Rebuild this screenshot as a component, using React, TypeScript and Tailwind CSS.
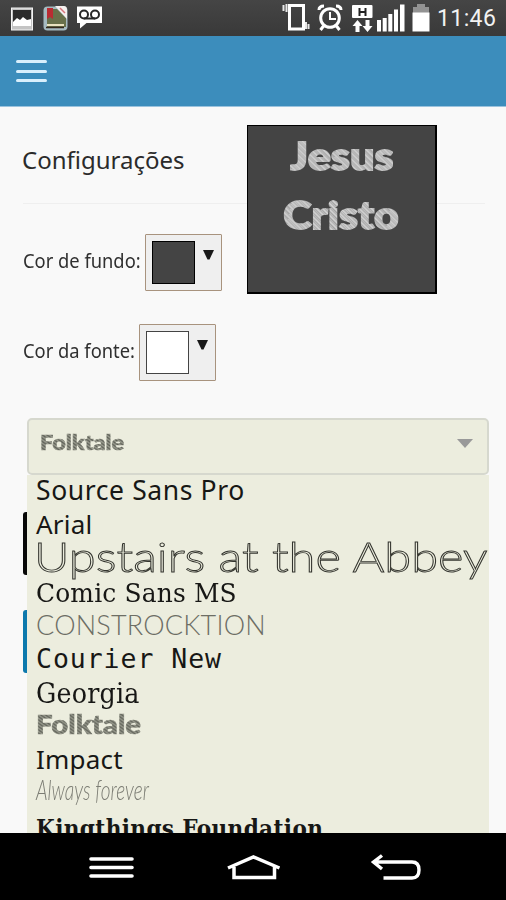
import React from "react";

const sketchFill =
  "bg-[repeating-linear-gradient(38deg,#62645b_0px,#9b9d90_1.3px,#5e6057_2.6px)] bg-clip-text text-transparent [-webkit-text-stroke:0.6px_transparent]";

const chalkFill =
  "bg-[repeating-linear-gradient(48deg,#a0a0a0_0px,#d6d6d6_1.5px,#adadad_3px,#c9c9c9_4px)] bg-clip-text text-transparent [-webkit-text-stroke:1.8px_transparent]";

const fonts: { name: string; row: string; text: string }[] = [
  { name: "Source Sans Pro", row: "h-[32px] leading-[31px]", text: "font-['Noto_Sans',sans-serif] text-[26.5px] tracking-[0.600px]" },
  { name: "Arial", row: "h-[34px] leading-[34px]", text: "font-['Noto_Sans',sans-serif] text-[26px] tracking-[0.200px]" },
  {
    name: "Upstairs at the Abbey",
    row: "h-[34px] leading-[31px]",
    text: "scale-x-[1.190] -ml-[2px] font-[Lato,sans-serif] text-[41px] font-light text-[#ecedde] [-webkit-text-stroke:0.9px_#33342e]",
  },
  { name: "Comic Sans MS", row: "h-[34px] leading-[35px]", text: "scale-x-[1.045] font-['DejaVu_Serif_Condensed','DejaVu_Serif',serif] text-[26.5px] tracking-[0.150px]" },
  { name: "CONSTROCKTION", row: "h-[33px] leading-[32px]", text: "font-[Lato,sans-serif] font-light text-[27px] tracking-[0.200px] text-[#6d6e65]" },
  { name: "Courier New", row: "h-[34px] leading-[34px]", text: "font-['DejaVu_Sans_Mono',monospace] text-[26.5px] tracking-[0.950px]" },
  { name: "Georgia", row: "h-[34px] leading-[35px]", text: "scale-x-[1.045] font-['DejaVu_Serif_Condensed','DejaVu_Serif',serif] text-[27px] tracking-[0.200px]" },
  { name: "Folktale", row: "h-[32px] leading-[28px]", text: `scale-x-[1.130] font-[Lato,sans-serif] font-black text-[26px] ${sketchFill}` },
  { name: "Impact", row: "h-[34px] leading-[35px]", text: "font-['Noto_Sans',sans-serif] text-[26px] tracking-[0.200px]" },
  { name: "Always forever", row: "h-[34px] leading-[27px]", text: "scale-x-[0.680] font-[Lato,sans-serif] font-light italic text-[28px] text-[#7c7d74]" },
  { name: "Kingthings Foundation", row: "h-[34px] leading-[38px]", text: "font-['DejaVu_Serif_Condensed','DejaVu_Serif',serif] font-bold text-[24px] tracking-[0.380px]" },
];

function StatusBar() {
  return (
    <div className="flex h-9 shrink-0 items-start bg-gradient-to-b from-[#454545] to-[#393939]">
      <svg className="h-9 w-[110px]" viewBox="0 0 110 36">
        <rect x="11.5" y="8" width="21" height="22" fill="#c4c4c4" stroke="#f4f4f4" />
        <rect x="13" y="10" width="18" height="12" fill="#2b2b2b" />
        <path d="M13 22l4-4 3 2 3-3 4 3 4-1v7H13z" fill="#fff" />
        <rect x="43.500" y="6.500" width="24" height="24" rx="4" fill="#a5bac0" />
        <path d="M47 9h10l9 9v9H47z" fill="#68704a" />
        <path d="M47 8h6v11l-3-2-3 2z" fill="#b92c32" />
        <path d="M55 6h9q3 0 3 4v9z" fill="#f4f0ee" />
        <path d="M60 8l5 5" stroke="#d8757c" strokeWidth="1.500" />
        <path d="M47 25h17" stroke="#e9e2c0" strokeWidth="2" />
        <path d="M46 27.500h18" stroke="#34291d" strokeWidth="1.500" />
        <path d="M77 6.500h25V23H86.500L80 28.500V23h-3z" fill="#fff" />
        <g fill="none" stroke="#282828" strokeWidth="2">
          <circle cx="84" cy="14.500" r="4" />
          <circle cx="95" cy="14.500" r="4" />
          <path d="M84 18.500h11" />
        </g>
      </svg>
      <svg className="ml-auto h-9 w-[154px]" viewBox="280 0 154 36">
        <rect x="289.500" y="5.500" width="14" height="23.500" fill="none" stroke="#fff" strokeWidth="3" />
        <path d="M283.500 5v6M286.500 4v8M306 22v7M308.500 24v5" stroke="#e8e8e8" strokeWidth="2" />
        <g fill="none" stroke="#fff">
          <circle cx="330" cy="18" r="9.300" strokeWidth="3" />
          <path d="M330 12v7h6" strokeWidth="2" />
          <path d="M319 10q0-4 5-4M341 10q0-4-5-4M323.500 26l-3 4M336.500 26l3 4" strokeWidth="3" />
        </g>
        <rect x="352" y="5" width="20.500" height="13" rx="1" fill="#fff" />
        <path d="M359.500 8v8M365.500 8v8M359.500 12h6" stroke="#222" strokeWidth="2" />
        <path d="M357.500 20l5 6h-3v6h-4v-6h-3zM367.500 32l-5-6h3v-6h4v6h3z" fill="#fff" />
        <path
          d="M377 20h4v11.500h-4zM382.700 18h4v13.500h-4zM388.300 14h4v17.500h-4zM394 9.500h4v22h-4zM400 4.500h4.500v27H400z"
          fill="#fff"
        />
        <path d="M417 4h8v3h4v6h-16V7h4z" fill="#929292" />
        <path d="M412.500 12.500h17v19h-17z" fill="#fff" />
      </svg>
      <span className="ml-[3px] w-[69px] whitespace-nowrap font-[Roboto,sans-serif] text-[23px] leading-[38px] tracking-[0.400px] text-[#f2f2f2]">
        11:46
      </span>
    </div>
  );
}

function ColorPicker({ label, swatch, labelClass }: { label: string; swatch: string; labelClass: string }) {
  return (
    <div className="flex h-[57px] items-start">
      <span className={`origin-left scale-x-[0.965] whitespace-nowrap text-[19px] leading-[55px] text-[#303030] ${labelClass}`}>
        {label}
      </span>
      <button className="flex h-[57px] w-[77px] shrink-0 rounded-[1px] border border-[#a8937e] bg-[#efefef] pl-[6px] pt-[6px]">
        <span className={`block h-[43px] w-[43px] border ${swatch}`} />
        <svg className="ml-[8px] mt-[9px]" width="11" height="10" viewBox="0 0 11 10">
          <path d="M0 0h11L6.500 9.500h-2z" fill="#181818" />
        </svg>
      </button>
    </div>
  );
}

function NavigationBar() {
  return (
    <nav className="flex h-[67px] shrink-0 bg-black">
      <svg className="h-[67px] w-full" viewBox="0 833 506 67" fill="none" stroke="#fff">
        <path d="M91 859h41M91 867.500h41M91 876h41" strokeWidth="3.600" strokeLinecap="round" />
        <path d="M228 868L253.500 857l26 11M234 867v10.500h40.500V867" strokeWidth="3.500" />
        <path d="M382 855.500l-8.500 6.500 8.500 7M374 862h38q7 0 7 8t-7 8h-28.500" strokeWidth="3.400" />
      </svg>
    </nav>
  );
}

export default function App() {
  return (
    <div className="flex h-[900px] w-[506px] flex-col overflow-hidden bg-[#f9f9f9] font-['Noto_Sans',sans-serif]">
      <StatusBar />
      <header className="flex h-[71px] shrink-0 border-b border-[#9bc3de] bg-[#3c8dbc] pl-[16px] pt-[24px]">
        <button className="flex h-[22px] w-[31px] flex-col justify-between">
          <span className="h-[3px] w-full rounded-sm bg-[#d9effc]" />
          <span className="h-[3px] w-full rounded-sm bg-[#d9effc]" />
          <span className="h-[3px] w-full rounded-sm bg-[#d9effc]" />
        </button>
      </header>

      <main className="relative flex min-h-0 flex-1 flex-col overflow-hidden">
        <section className="flex h-[311px] shrink-0 flex-col pl-[23px] pr-[21px]">
          <h1 className="h-[97px] shrink-0 border-b border-[#efefef] text-[24px] leading-[106px] text-[#2b2b2b]">
            <span className="-ml-px inline-block">Configurações</span>
          </h1>
          <div className="mt-[30px] flex flex-col gap-[33px]">
            <ColorPicker label="Cor de fundo:" swatch="border-black bg-[#444444]" labelClass="w-[122px]" />
            <ColorPicker label="Cor da fonte:" swatch="border-[#444] bg-white" labelClass="w-[116px]" />
          </div>
        </section>

        {/* Live preview floats over the settings heading and its divider */}
        <div className="absolute left-[247px] top-[18px] flex h-[169px] w-[190px] flex-col items-center border border-r-2 border-b-2 border-black bg-[#444444] font-[Lato,sans-serif] text-[38px] font-black leading-[59px]">
          <span className={`scale-x-[1.140] ${chalkFill}`}>Jesus</span>
          <span className={`scale-x-[1.130] ${chalkFill}`}>Cristo</span>
        </div>

        <div className="flex min-h-0 flex-1">
          <div className="flex w-[27px] shrink-0 flex-col items-end gap-[35px] pt-[94px]">
            <span className="h-[63px] w-[4px] rounded-l-[3px] bg-[#080808]" />
            <span className="h-[63px] w-[4px] rounded-l-[3px] bg-[#0d79ad]" />
          </div>
          <div className="flex w-[462px] flex-col">
            <div className="flex h-[57px] shrink-0 items-start justify-between rounded-[5px] border-2 border-[#d6d8ce] bg-[#ecedde] pl-[11px] pr-[14px]">
              <span className={`origin-left scale-x-[1.120] font-[Lato,sans-serif] text-[21px] font-black leading-[43px] ${sketchFill}`}>
                Folktale
              </span>
              <svg className="mt-[19px]" width="16" height="9" viewBox="0 0 16 9">
                <path d="M0 0h16L8 9z" fill="#999" />
              </svg>
            </div>
            <ul className="min-h-0 flex-1 overflow-hidden bg-[#ecedde] pl-[9px] text-[#171715]">
              {fonts.map((font) => (
                <li key={font.name} className={`whitespace-nowrap ${font.row}`}>
                  <span className={`inline-block origin-left ${font.text}`}>{font.name}</span>
                </li>
              ))}
            </ul>
          </div>
        </div>
      </main>
      <NavigationBar />
    </div>
  );
}
